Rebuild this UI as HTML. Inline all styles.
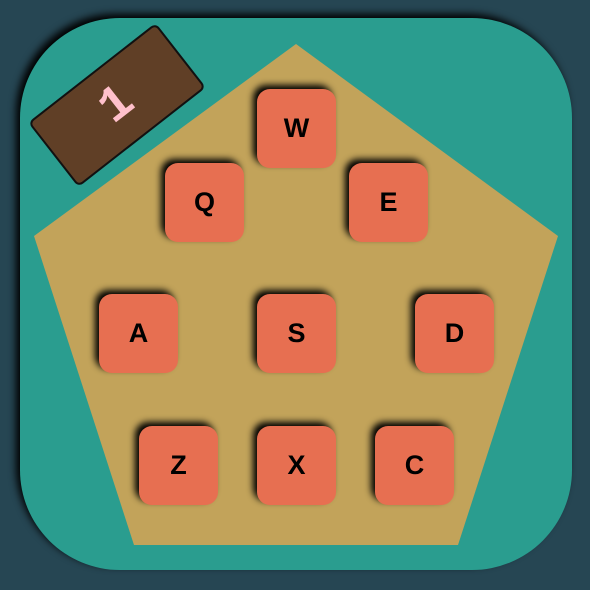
<!DOCTYPE html><html><head><style>
body{margin:0;width:590px;height:590px;background:#264653;position:relative;overflow:hidden;font-family:"Liberation Sans",sans-serif}
.board{position:absolute;left:20px;top:18px;width:552px;height:552px;border-radius:100px;background:#2a9d8f;box-shadow:-4px -4px 8px #000;overflow:hidden}
svg{position:absolute;left:0;top:0}
.k{position:absolute;width:79px;height:79px;border-radius:13px;background:#e76f51;box-shadow:-4px -4px 7px #000;display:flex;align-items:center;justify-content:center;font-weight:bold;font-size:27px;color:#000}
.badge{position:absolute;left:36px;top:64px;width:158px;height:78px;background:#603f26;border:2px solid #111;border-radius:6px;transform:rotate(-38deg);display:flex;align-items:center;justify-content:center;color:#ffc0cb;font:bold 50px "Liberation Mono",monospace}
</style></head><body>
<div class="board"></div>
<svg width="590" height="590"><polygon points="296,44 558,236 458,545 134,545 34,236" fill="#c2a35a"/></svg>
<div class="badge">1</div>
<div class="k" style="left:257px;top:89px">W</div>
<div class="k" style="left:165px;top:163px">Q</div>
<div class="k" style="left:349px;top:163px">E</div>
<div class="k" style="left:99px;top:294px">A</div>
<div class="k" style="left:257px;top:294px">S</div>
<div class="k" style="left:415px;top:294px">D</div>
<div class="k" style="left:139px;top:426px">Z</div>
<div class="k" style="left:257px;top:426px">X</div>
<div class="k" style="left:375px;top:426px">C</div>
</body></html>
